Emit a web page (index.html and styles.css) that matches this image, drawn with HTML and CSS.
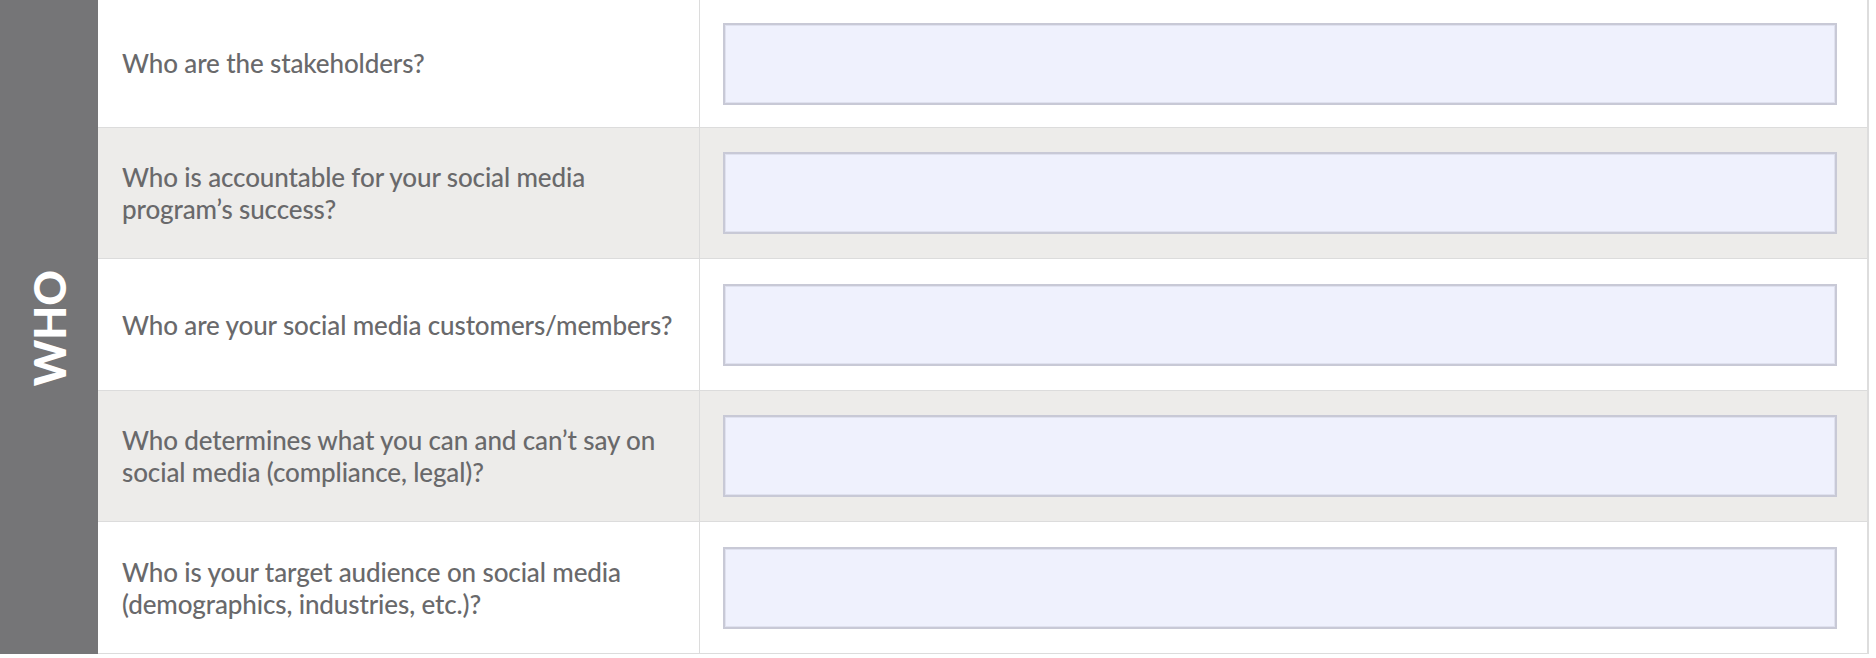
FILE: index.html
```html
<!DOCTYPE html>
<html lang="en">
<head>
<meta charset="utf-8">
<title>Who</title>
<link rel="stylesheet" href="styles.css">
</head>
<body>
<div class="sheet">
  <div class="side"><span class="side-label">WHO</span></div>
  <div class="rows">
    <div class="row row--first">
      <div class="q">Who are the stakeholders?</div>
      <div class="a"><div class="field"></div></div>
    </div>
    <div class="row row--alt">
      <div class="q">Who is accountable for your social media program’s success?</div>
      <div class="a"><div class="field"></div></div>
    </div>
    <div class="row">
      <div class="q">Who are your social media customers/members?</div>
      <div class="a"><div class="field"></div></div>
    </div>
    <div class="row row--alt">
      <div class="q">Who determines what you can and can’t say on social media (compliance, legal)?</div>
      <div class="a"><div class="field"></div></div>
    </div>
    <div class="row">
      <div class="q">Who is your target audience on social media (demographics, industries, etc.)?</div>
      <div class="a"><div class="field"></div></div>
    </div>
  </div>
</div>
</body>
</html>
```

FILE: styles.css
```css
html, body {
  margin: 0;
  padding: 0;
  background: #ffffff;
}

body {
  font-family: Lato, "Liberation Sans", sans-serif;
}

.sheet {
  display: flex;
  width: 1869px;
}

.side {
  width: 98px;
  flex: none;
  background: #757577;
  display: flex;
  align-items: center;
  justify-content: center;
}

.side-label {
  writing-mode: vertical-rl;
  transform: rotate(180deg);
  color: #ffffff;
  font-weight: 900;
  font-size: 44px;
  line-height: 1;
  margin-top: 2px;
}

.rows {
  flex: 1;
  border-right: 2px solid #dddddd;
}

.row {
  display: grid;
  grid-template-columns: 602px 1fr;
  border-bottom: 1px solid #dcdcdc;
  background: #ffffff;
}

.row--alt {
  background: #edecea;
}

.q {
  display: flex;
  align-items: center;
  padding: 0 26px 0 24px;
  border-right: 1px solid #dcdcdc;
  color: #69696b;
  font-size: 26px;
  font-weight: 500;
  line-height: 32px;
  letter-spacing: -0.12px;
}

.a {
  padding: 24.3px 30px 24.3px 23px;
}

.row--first .a {
  padding-top: 23px;
  padding-bottom: 21.7px;
}

.field {
  height: 82px;
  box-sizing: border-box;
  background: #eff1fd;
  border: 2px solid #c8c9d6;
  box-shadow: inset 0 0 0 1px #dfe1ef;
}
```
